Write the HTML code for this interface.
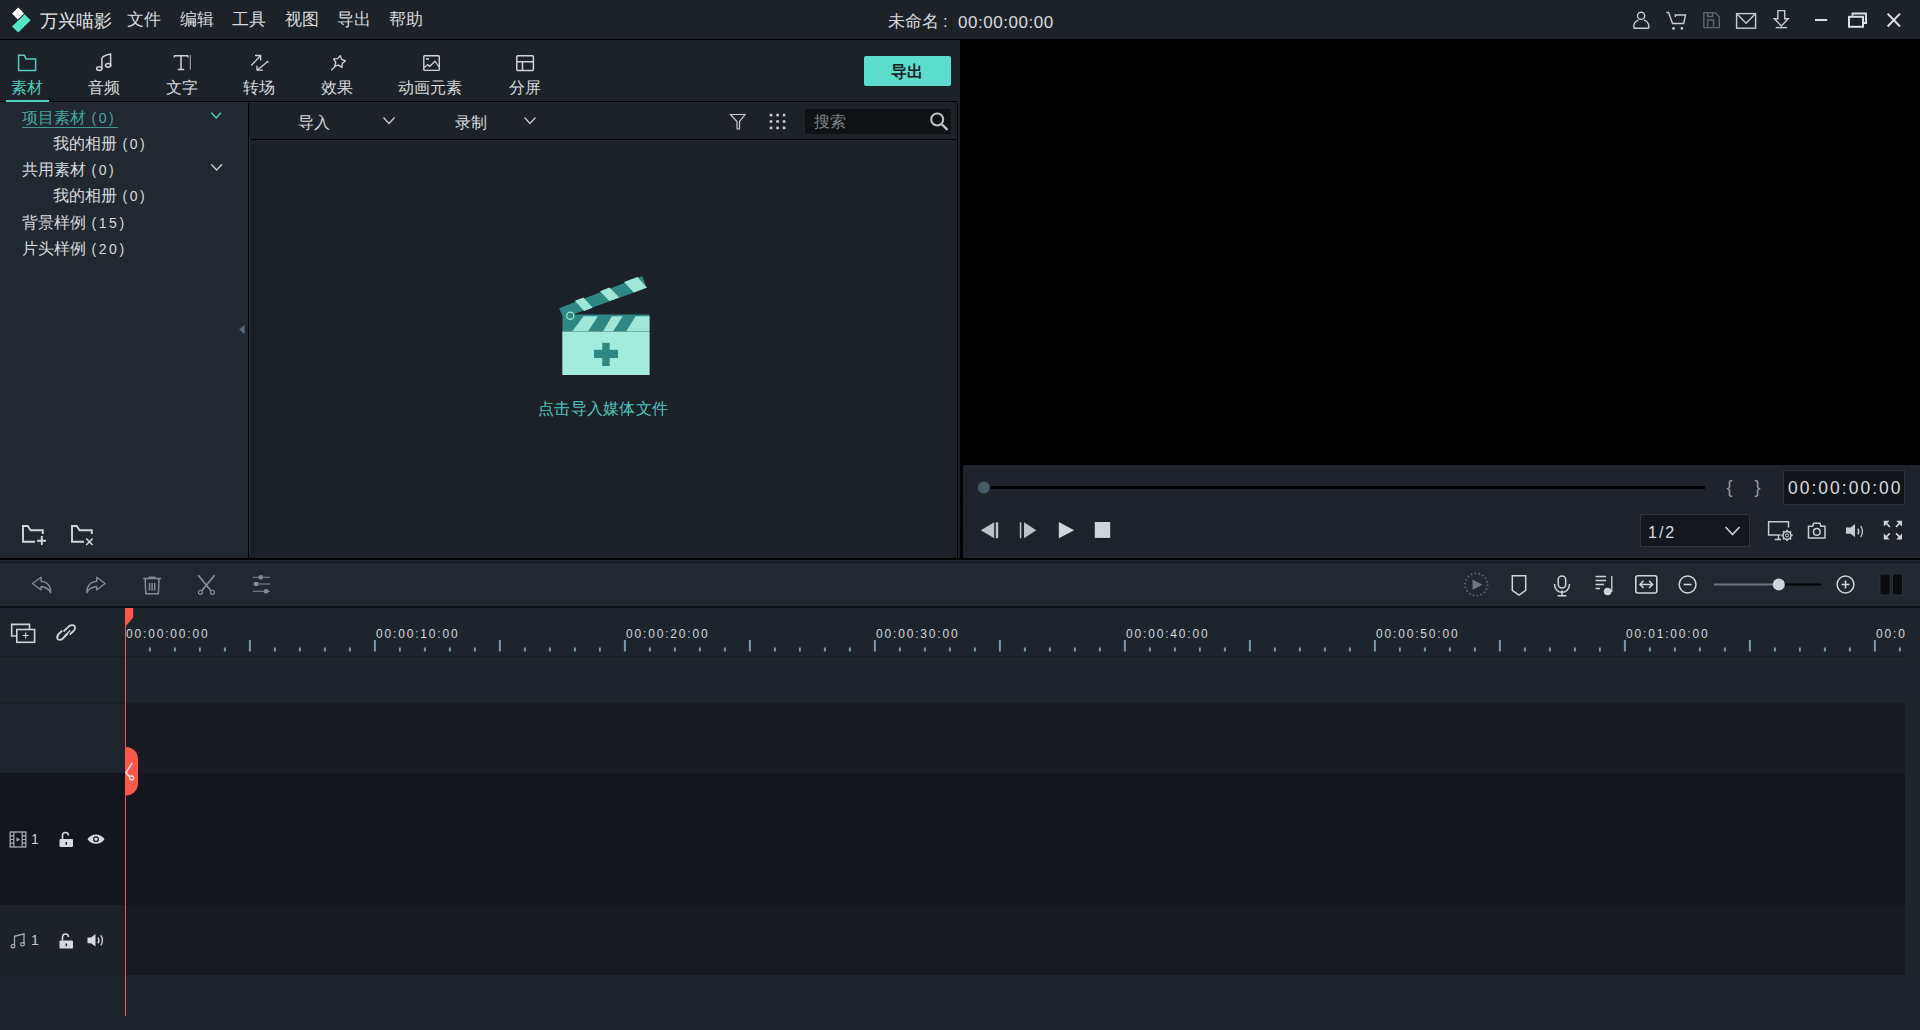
<!DOCTYPE html>
<html><head><meta charset="utf-8">
<style>
*{margin:0;padding:0;box-sizing:border-box}
html,body{width:1920px;height:1030px;overflow:hidden;background:#1e232a;font-family:"Liberation Sans",sans-serif;color:#d4d8dc}
.a{position:absolute}
svg{position:absolute;overflow:visible}
#title{left:0;top:0;width:1920px;height:39px;background:#1d2229}
#sep1{left:0;top:38.5px;width:1920px;height:1.5px;background:#000}
#tabs{left:0;top:40px;width:960px;height:61px;background:#1d2229}
#tabline{left:0;top:101px;width:957.8px;height:1.2px;background:#000}
#tree{left:0;top:102px;width:248px;height:455px;background:#222830}
#treeline{left:248px;top:103px;width:1px;height:455px;background:#000}
#treeline2{left:249px;top:140px;width:1px;height:418px;background:#22272f}
#treeline2{left:249px;top:139px;width:1px;height:418px;background:#262c34}
#media{left:249px;top:102px;width:708px;height:456px;background:#1c2128}
#mediabar{left:249px;top:102px;width:708px;height:37px;background:#1d2229}
#mbline{left:251px;top:138.8px;width:706px;height:1.4px;background:#000}
#vline{left:957px;top:103px;width:1px;height:455px;background:#000}
#vline2{left:957px;top:40px;width:3px;height:518px;background:#1d2229}
#preview{left:960px;top:39px;width:960px;height:426px;background:#000}
#ctrl{left:963px;top:465px;width:957px;height:93px;background:linear-gradient(#1f242c 0,#1e232b 80%,#20252d 100%)}
#ctrlblk{left:960px;top:465px;width:3px;height:93px;background:#000}
#hsep{left:0;top:557.8px;width:1920px;height:2.3px;background:#000}
#hsep2{left:0;top:560px;width:1920px;height:2px;background:#20262f}
#hsep3{left:0;top:562px;width:1920px;height:1px;background:#13161b}
#tltool{left:0;top:563px;width:1920px;height:43px;background:#222830}
#tlline{left:0;top:606px;width:1920px;height:2px;background:#0d1014}
#ruler{left:0;top:608px;width:1920px;height:422px;background:#1e242b}
.t16{font-size:16px;line-height:20px;white-space:nowrap;color:#d8dbde}
.mono{font-family:"Liberation Mono",monospace}
.par{font-family:"Liberation Sans",sans-serif;font-size:14px;letter-spacing:2.6px;margin-left:1px}
.rl{position:absolute;top:624.5px;font-size:13.6px;line-height:17px;color:#d6dade;letter-spacing:2.1px;white-space:nowrap;transform:scaleX(0.88);transform-origin:0 0}
</style></head><body>
<div class="a" id="title"></div>
<div class="a" id="sep1"></div>
<div class="a" id="tabs"></div>
<div class="a" id="tabline"></div>
<div class="a" id="tree"></div>
<div class="a" id="treeline"></div>
<div class="a" id="media"></div>
<div class="a" id="mediabar"></div>
<div class="a" id="mbline"></div>
<div class="a" id="treeline2"></div>
<div class="a" id="vline2"></div>
<div class="a" id="vline"></div>
<div class="a" id="preview"></div>
<div class="a" id="ctrlblk"></div>
<div class="a" id="ctrl"></div>
<div class="a" id="hsep"></div>
<div class="a" id="hsep2"></div>
<div class="a" id="hsep3"></div>
<div class="a" id="tltool"></div>
<div class="a" id="tlline"></div>
<div class="a" id="ruler"></div>

<!-- TITLE BAR -->
<svg style="left:0;top:0" width="40" height="39">
<polygon points="12,13.5 18.2,7.4 24,13.4 17.8,19.4" fill="#ffffff"/>
<polygon points="12,26.6 24.6,14.3 30.7,20.2 18.2,32.6" fill="#55e6c4"/>
</svg>
<div class="a t16" style="left:40px;top:11px;font-size:18px;color:#e6e6e6">万兴喵影</div>
<div class="a t16" style="left:127px;top:10px;font-size:17px">文件</div>
<div class="a t16" style="left:180px;top:10px;font-size:17px">编辑</div>
<div class="a t16" style="left:232px;top:10px;font-size:17px">工具</div>
<div class="a t16" style="left:285px;top:10px;font-size:17px">视图</div>
<div class="a t16" style="left:337px;top:10px;font-size:17px">导出</div>
<div class="a t16" style="left:389px;top:10px;font-size:17px">帮助</div>
<div class="a t16" style="left:888px;top:12px;font-size:17px">未命名</div><div class="a t16" style="left:943px;top:12px;font-size:17px">:</div><div class="a t16" style="left:958px;top:13px;font-size:17px;letter-spacing:0.55px">00:00:00:00</div>

<!-- TITLE ICONS -->
<svg style="left:1620px;top:0" width="300" height="39" fill="none" stroke="#c9ced4" stroke-width="1.4">
<circle cx="21.1" cy="15.8" r="3.6"/>
<path d="M13.8,28.2 L13.8,26.5 C13.8,22.5 16.5,20.5 18.5,20.2 M28.8,28.2 L28.8,26.5 C28.8,22.5 26,20.5 24,20.2 M13.8,28.2 H28.8"/>
<path d="M46.4,12.5 H48.6 L52.5,23.5 H63.7 L65.5,15 H55.3 V17"/>
<circle cx="53.5" cy="28.4" r="1.3" fill="#c9ced4" stroke="none"/>
<circle cx="61.9" cy="28.4" r="1.3" fill="#c9ced4" stroke="none"/>
<g stroke="#5c636b"><path d="M83.8,12.8 H95.5 L99.3,17 V27.6 H83.8 Z"/><path d="M87.6,12.8 V16.5 H92.6 V12.8 M87.6,27.6 V20 H93.5 V27.6"/></g>
<rect x="116.6" y="13.6" width="19" height="14.6"/>
<path d="M116.6,13.6 L126.1,23.3 L135.6,13.6"/>
<path d="M157.9,10.6 H164.7 V18.8 H168.2 L161.3,25.9 L154.3,18.8 H157.9 Z"/>
<path d="M155.7,27.6 H167"/>
<g stroke="#dadfe4" stroke-width="2"><path d="M195,20 H207.2"/>
<path d="M232.6,15.7 V13.4 H246 V23 H243.5"/><rect x="229" y="16.8" width="14" height="10"/>
<path d="M267.6,13.6 L280,26.5 M280,13.6 L267.6,26.5"/></g>
</svg>

<!-- TABS -->
<svg style="left:0;top:40px" width="560" height="62" fill="none" stroke="#cfd4d9" stroke-width="1.3">
<path d="M18.6,15.3 H24.4 L26.2,19 H35.6 V30.6 H18.6 Z" stroke="#4fd0c0" stroke-width="1.5"/>
<path d="M101.9,28.3 V18.3 C102.6,16.5 106,15 110.6,14.1 V26.3" stroke-width="1.5"/>
<ellipse cx="99.3" cy="28.6" rx="2.7" ry="1.9" stroke-width="1.5"/>
<ellipse cx="108.1" cy="25.3" rx="2.6" ry="1.9" stroke-width="1.5"/>
<path d="M174.4,15.7 H187.8 M174.4,15.2 V17.6 M187.8,15.2 V17.6 M181,15.7 V29.4 M177.8,29.4 H184.2" stroke-width="1.5"/>
<path d="M190.3,15 V29.5" stroke-width="0.8"/>
<path d="M251.3,25.5 L260.6,15.5 M255,15.5 H260.6 V20.5 M267.5,21.8 L257,30.2 M257,25.8 V30.2 H263" stroke-width="1.3"/>
<circle cx="267.5" cy="21.8" r="1" fill="#cfd4d9" stroke="none"/>
<polygon points="340.3,15.6 341.6,19.4 345.4,20.9 342.2,23.4 342.0,27.5 338.6,25.1 334.7,26.2 335.8,22.3 333.6,18.8 337.7,18.7" stroke-width="1.3" stroke-linejoin="round"/>
<path d="M331.3,30.2 L335.5,26" stroke-width="1.3"/>
<rect x="423.8" y="15.8" width="15.5" height="14.6" rx="0.8" stroke-width="1.4"/>
<rect x="426" y="18.2" width="3" height="1.6" fill="#cfd4d9" stroke="none"/>
<path d="M424,27.8 L427.8,24.5 L429.5,26.5 L435,21.2 L439,27" stroke-width="1.2"/>
<rect x="516.8" y="15.8" width="16.6" height="14.6" rx="0.8" stroke-width="1.5"/>
<path d="M516.8,21.7 H533.4 M522.5,21.7 V30.4" stroke-width="1.5"/>
</svg>
<div class="a t16" style="left:11px;top:78px;color:#4fcfbf">素材</div>
<div class="a t16" style="left:88px;top:78px">音频</div>
<div class="a t16" style="left:166px;top:78px">文字</div>
<div class="a t16" style="left:243px;top:78px">转场</div>
<div class="a t16" style="left:321px;top:78px">效果</div>
<div class="a t16" style="left:398px;top:78px">动画元素</div>
<div class="a t16" style="left:509px;top:78px">分屏</div>
<div class="a" style="left:6px;top:100px;width:43px;height:1.5px;background:#4fd0c0"></div>
<div class="a" style="left:864px;top:56px;width:87px;height:30px;background:#5cdccd;border-radius:2px"></div>
<div class="a t16" style="left:891px;top:62px;font-weight:bold;color:#1a2427;font-size:16px">导出</div>

<!-- TREE -->
<div class="a t16" style="left:22px;top:108px;color:#45a69d">项目素材 <span class="par">(0)</span></div>
<div class="a" style="left:22px;top:127px;width:96px;height:1px;background:#3c9a92"></div>
<div class="a t16" style="left:53px;top:134px">我的相册 <span class="par">(0)</span></div>
<div class="a t16" style="left:22px;top:160px">共用素材 <span class="par">(0)</span></div>
<div class="a t16" style="left:53px;top:186px">我的相册 <span class="par">(0)</span></div>
<div class="a t16" style="left:22px;top:213px">背景样例 <span class="par">(15)</span></div>
<div class="a t16" style="left:22px;top:239px">片头样例 <span class="par">(20)</span></div>
<svg style="left:0;top:0" width="250" height="560" fill="none" stroke-width="1.4">
<path d="M211.3,112.8 L216.2,118 L221,112.8" stroke="#4fd0c0"/>
<path d="M211.3,164.3 L216.6,170 L222,164.3" stroke="#c8ccd0"/>
<polygon points="244.7,324.7 244.7,334.3 239,329.5" fill="#5a6878" stroke="none"/>
<g stroke="#d2d7dc" stroke-width="1.9">
<path d="M35,541.8 H23 V526 H27.7 L30.6,530.2 H42.8 V534"/>
<path d="M37.1,540.7 H45.9 M41.8,536 V544.9"/>
<path d="M84,541.8 H72 V526 H76.7 L79.6,530.2 H91.8 V534"/>
<path d="M86.2,538.5 L92.6,545 M92.6,538.5 L86.2,545" stroke-width="1.6"/>
</g>
</svg>

<!-- MEDIA BAR -->
<div class="a t16" style="left:298px;top:113px">导入</div>
<div class="a t16" style="left:455px;top:113px">录制</div>
<svg style="left:0;top:0" width="960" height="140" fill="none" stroke="#c8ccd0" stroke-width="1.3">
<path d="M383.5,117.5 L389,123.5 L394.5,117.5"/>
<path d="M524.5,117.5 L530,123.5 L535.5,117.5"/>
<path d="M730.5,114.5 H745 L739.5,121.5 V129 H737 V121.5 Z" stroke-width="1.2"/>
<g fill="#c8ccd0" stroke="none">
<rect x="769.7" y="113.8" width="2.6" height="2.6"/><rect x="776.3" y="113.8" width="2.6" height="2.6"/><rect x="782.8" y="113.8" width="2.6" height="2.6"/>
<rect x="769.7" y="120.2" width="2.6" height="2.6"/><rect x="776.3" y="120.2" width="2.6" height="2.6"/><rect x="782.8" y="120.2" width="2.6" height="2.6"/>
<rect x="769.7" y="126.6" width="2.6" height="2.6"/><rect x="776.3" y="126.6" width="2.6" height="2.6"/><rect x="782.8" y="126.6" width="2.6" height="2.6"/>
</g>
</svg>
<div class="a" style="left:805px;top:109px;width:146px;height:25px;background:#0f1215"></div>
<div class="a t16" style="left:814px;top:112px;color:#7d8288">搜索</div>
<svg style="left:0;top:0" width="960" height="140" fill="none" stroke="#c0c5ca" stroke-width="1.6">
<circle cx="937.2" cy="119.5" r="6" stroke-width="2"/>
<path d="M942,124.5 L947.5,129.8" stroke-width="2.4"/>
</svg>

<!-- CLAPPER -->
<svg style="left:0;top:0" width="960" height="560">
<polygon points="559.1,308.2 642.2,276 646.8,287.9 575,313.8 562.6,316" fill="#2e8783"/>
<g fill="#9fe8d8">
<polygon points="574.8,300.8 583.5,297.4 592.6,307.8 584.2,311"/>
<polygon points="600,291.2 609.4,287.6 619.2,297.4 609.4,301"/>
<polygon points="624,282 637.4,277 646.8,287.6 633.9,292.5"/>
</g>
<rect x="562.5" y="314.5" width="87" height="17" fill="#2e8783"/>
<g fill="#9fe8d8">
<polygon points="583.5,316.2 597.9,316.2 588.1,331.3 572.4,331.3"/>
<polygon points="611.8,316.2 622.7,316.2 613.2,331.3 603.1,331.3"/>
<polygon points="635.6,316.2 649.5,316.2 649.5,331.3 626.2,331.3"/>
</g>
<circle cx="570.3" cy="315.8" r="3.6" fill="#2e8783" stroke="#9fe8d8" stroke-width="1.2"/>
<rect x="562.3" y="331.5" width="87.3" height="43.5" fill="#a3ecdc"/>
<rect x="594" y="349.8" width="24" height="8.2" fill="#2e8783"/>
<rect x="602.3" y="342.8" width="7.4" height="23.2" fill="#2e8783"/>
</svg>
<div class="a t16" style="left:538px;top:399px;color:#4cc7bf;letter-spacing:0.3px">点击导入媒体文件</div>

<!-- PLAYER CONTROLS -->
<div class="a" style="left:990px;top:485.5px;width:715px;height:3.5px;background:#000"></div>
<svg style="left:0;top:0" width="1920" height="560">
<circle cx="983.8" cy="487.4" r="6" fill="#4a5a66"/>
<g fill="#bdc2c9">
<polygon points="980.8,530.3 994.2,522.3 994.2,538.2"/><rect x="995.8" y="522.3" width="2.4" height="15.9"/>
<rect x="1019.8" y="522.3" width="1.5" height="15.9"/><polygon points="1024,522.3 1024,538.2 1036.3,530.3"/>
</g>
<g fill="#d0d5dc">
<polygon points="1058.8,522 1058.8,538.2 1074.2,530.2"/>
<rect x="1094.8" y="522" width="15.4" height="15.9"/>
</g>
</svg>
<div class="a" style="left:1726.5px;top:476px;font-size:18px;line-height:22px;color:#959aa0">{</div>
<div class="a" style="left:1754.5px;top:476px;font-size:18px;line-height:22px;color:#959aa0">}</div>
<div class="a" style="left:1783px;top:470px;width:122px;height:35px;background:#111418;border:1px solid #2b323a"></div>
<div class="a" style="left:1788px;top:477px;font-size:19px;line-height:22px;color:#dadde1;letter-spacing:2.2px;transform:scaleX(0.92);transform-origin:0 0">00:00:00:00</div>
<div class="a" style="left:1640px;top:514px;width:110px;height:33px;background:#14181d;border:1px solid #2e353d"></div>
<div class="a" style="left:1648px;top:523px;font-size:16px;line-height:20px;color:#d8dce0;letter-spacing:2px">1/2</div>
<svg style="left:0;top:0" width="1920" height="560" fill="none" stroke="#c8cdd3" stroke-width="1.6">
<path d="M1725.5,527 L1732.5,534.5 L1739.5,527" stroke-width="1.8"/>
<path d="M1780.5,535 H1768.6 V521.8 H1788.5 V527.5" stroke-width="1.5"/>
<path d="M1778.5,535 V539.5 M1774.8,539.5 H1781" stroke-width="1.5"/>
<circle cx="1787" cy="535.4" r="3.9" stroke-width="1.5"/>
<circle cx="1787" cy="535.4" r="1.6" stroke-width="1"/>
<path d="M1787,529.8 V531.2 M1787,539.6 V541 M1781.4,535.4 H1782.8 M1791.2,535.4 H1792.6 M1783,531.4 L1784,532.4 M1790,538.4 L1791,539.4 M1791,531.4 L1790,532.4 M1784,538.4 L1783,539.4" stroke-width="1.6"/>
<path d="M1808.5,526.2 H1812.8 L1813.6,523.3 H1820 L1820.8,526.2 H1825 V538 H1808.5 Z" stroke-width="1.5" stroke-linejoin="round"/>
<circle cx="1816.8" cy="531.9" r="3.3" stroke-width="1.5"/>
<polygon points="1846,527.4 1850.6,527.4 1855,524.1 1855,537 1850.6,533.8 1846,533.8" fill="#c8cdd3" stroke="none"/>
<path d="M1857.8,528.6 Q1859.8,531.4 1857.8,534.3 M1860.7,525.9 Q1864.3,531.4 1860.7,537" stroke-width="1.3"/>
<g fill="#d0d5da" stroke="none"><polygon points="1883.8,520.8 1889.6,520.8 1883.8,526.6"/><polygon points="1902,520.8 1896.2,520.8 1902,526.6"/>
<polygon points="1883.8,539.4 1889.6,539.4 1883.8,533.6"/><polygon points="1902,539.4 1896.2,539.4 1902,533.6"/></g>
<g stroke-width="1.7" stroke="#d0d5da"><path d="M1885.5,522.5 L1889.8,526.8 M1900.3,522.5 L1896,526.8 M1885.5,537.7 L1889.8,533.4 M1900.3,537.7 L1896,533.4"/></g>
</svg>

<!-- TIMELINE TOOLBAR -->
<svg style="left:0;top:0" width="1920" height="610" fill="none" stroke="#868d95" stroke-width="1.3">
<path d="M32.5,583.6 L41.1,577.3 V581.3 C47,581.3 51,586 50.7,592.7 C48.5,588.5 45,587 41.1,586.5 V589.9 Z" stroke-linejoin="round"/>
<path d="M105.1,583.6 L96.7,577.3 V581.3 C90.5,581.3 86.8,586 86.8,592.7 C89,588.5 92.5,587 96.7,586.5 V589.9 Z" stroke-linejoin="round"/>
<path d="M143.2,578.5 H161 M149.5,578.3 V577.3 H154.7 V578.3 M145.2,578.8 L145.8,593.8 H158.4 L159,578.8 M149.5,583 V590.5 M152.1,583 V590.5 M154.7,583 V590.5" stroke-width="1.5"/>
<path d="M198.2,575.3 L210.8,590.5 M214.6,575.3 L202,590.5" stroke-width="1.8"/>
<circle cx="200.4" cy="592.3" r="2" stroke-width="1.2"/><circle cx="212.4" cy="592.3" r="2" stroke-width="1.2"/>
<path d="M252.8,577.3 H270 M252.8,584 H270 M252.8,591.3 H270" stroke-width="1.1"/>
<g fill="#868d95" stroke="none"><rect x="258.8" y="575.3" width="4" height="4"/><rect x="254.3" y="582" width="4" height="4"/><rect x="264.1" y="589.3" width="4" height="4"/></g>

<circle cx="1476.3" cy="584.5" r="11.2" stroke="#5f666d" stroke-width="1.8" stroke-dasharray="1.6 2.3"/>
<polygon points="1472.5,579.5 1472.5,590 1482.3,584.7" fill="#70777e" stroke="none"/>
<path d="M1512.3,575.8 H1525.7 V590.3 L1519,595 L1512.3,590.3 Z" stroke="#d0d5da" stroke-width="1.5"/>
<rect x="1558.2" y="576" width="7.5" height="12" rx="3.75" stroke="#d0d5da" stroke-width="1.5"/>
<path d="M1554.5,584 C1554.5,595 1569.5,595 1569.5,584 M1562,590.5 V595.5 M1557.5,595.8 H1566.5" stroke="#d0d5da" stroke-width="1.5"/>
<path d="M1595.5,576.5 H1606 M1595.5,580.5 H1606 M1595.5,584.5 H1604 M1595.5,588.5 H1600 M1611.8,576 V592" stroke="#d0d5da" stroke-width="1.3"/>
<circle cx="1607.6" cy="591.5" r="3.8" fill="#d0d5da" stroke="none"/>
<rect x="1635.8" y="575.8" width="21" height="17.2" rx="2" stroke="#d0d5da" stroke-width="1.6"/>
<path d="M1640,584.4 H1652.6 M1643.5,580.8 L1640,584.4 L1643.5,588 M1649.1,580.8 L1652.6,584.4 L1649.1,588" stroke="#d0d5da" stroke-width="1.5"/>
<circle cx="1687.6" cy="584.5" r="8.4" stroke="#d0d5da" stroke-width="1.5"/>
<path d="M1683.7,584.5 H1691.5" stroke="#d0d5da" stroke-width="1.6"/>
<path d="M1713.8,584.5 H1778.8" stroke="#6a7580" stroke-width="2"/>
<path d="M1778.8,584.5 H1821.3" stroke="#000" stroke-width="2"/>
<circle cx="1778.8" cy="584.5" r="6" fill="#d0d5da" stroke="none"/>
<circle cx="1845.5" cy="584.5" r="8.4" stroke="#d0d5da" stroke-width="1.5"/>
<path d="M1841.6,584.5 H1849.4 M1845.5,580.6 V588.4" stroke="#d0d5da" stroke-width="1.6"/>
<rect x="1880" y="574" width="10" height="21" fill="#0a0c0f" stroke="#2a3038" stroke-width="1"/>
<rect x="1892.5" y="574" width="10" height="21" fill="#0a0c0f" stroke="#2a3038" stroke-width="1"/>
</svg>

<!-- TIMELINE -->
<div class="a" style="left:0;top:656px;width:1905px;height:1px;background:#191e24"></div>
<div class="a" style="left:0;top:703px;width:125px;height:70px;background:#1f252c;border-top:1px solid #1a1f25"></div>
<div class="a" style="left:126px;top:703px;width:1779px;height:70px;background:#181c22"></div>
<div class="a" style="left:0;top:773px;width:1905px;height:132px;background:#13161c"></div>
<div class="a" style="left:0;top:905px;width:125px;height:70px;background:#1d2229"></div>
<div class="a" style="left:126px;top:905px;width:1779px;height:70px;background:#171b21"></div>
<svg style="left:0;top:0" width="1920" height="1030">
<g fill="#7799b0"><rect x="148.9" y="647.5" width="2" height="4"/><rect x="173.9" y="647.5" width="2" height="4"/><rect x="198.9" y="647.5" width="2" height="4"/><rect x="223.9" y="647.5" width="2" height="4"/><rect x="248.9" y="640" width="2" height="11.5"/><rect x="273.9" y="647.5" width="2" height="4"/><rect x="298.9" y="647.5" width="2" height="4"/><rect x="323.9" y="647.5" width="2" height="4"/><rect x="348.9" y="647.5" width="2" height="4"/><rect x="373.9" y="640" width="2" height="11.5"/><rect x="398.9" y="647.5" width="2" height="4"/><rect x="423.9" y="647.5" width="2" height="4"/><rect x="448.9" y="647.5" width="2" height="4"/><rect x="473.9" y="647.5" width="2" height="4"/><rect x="498.9" y="640" width="2" height="11.5"/><rect x="523.9" y="647.5" width="2" height="4"/><rect x="548.9" y="647.5" width="2" height="4"/><rect x="573.9" y="647.5" width="2" height="4"/><rect x="598.9" y="647.5" width="2" height="4"/><rect x="623.9" y="640" width="2" height="11.5"/><rect x="648.9" y="647.5" width="2" height="4"/><rect x="673.9" y="647.5" width="2" height="4"/><rect x="698.9" y="647.5" width="2" height="4"/><rect x="723.9" y="647.5" width="2" height="4"/><rect x="748.9" y="640" width="2" height="11.5"/><rect x="773.9" y="647.5" width="2" height="4"/><rect x="798.9" y="647.5" width="2" height="4"/><rect x="823.9" y="647.5" width="2" height="4"/><rect x="848.9" y="647.5" width="2" height="4"/><rect x="873.9" y="640" width="2" height="11.5"/><rect x="898.9" y="647.5" width="2" height="4"/><rect x="923.9" y="647.5" width="2" height="4"/><rect x="948.9" y="647.5" width="2" height="4"/><rect x="973.9" y="647.5" width="2" height="4"/><rect x="998.9" y="640" width="2" height="11.5"/><rect x="1023.9" y="647.5" width="2" height="4"/><rect x="1048.9" y="647.5" width="2" height="4"/><rect x="1073.9" y="647.5" width="2" height="4"/><rect x="1098.9" y="647.5" width="2" height="4"/><rect x="1123.9" y="640" width="2" height="11.5"/><rect x="1148.9" y="647.5" width="2" height="4"/><rect x="1173.9" y="647.5" width="2" height="4"/><rect x="1198.9" y="647.5" width="2" height="4"/><rect x="1223.9" y="647.5" width="2" height="4"/><rect x="1248.9" y="640" width="2" height="11.5"/><rect x="1273.9" y="647.5" width="2" height="4"/><rect x="1298.9" y="647.5" width="2" height="4"/><rect x="1323.9" y="647.5" width="2" height="4"/><rect x="1348.9" y="647.5" width="2" height="4"/><rect x="1373.9" y="640" width="2" height="11.5"/><rect x="1398.9" y="647.5" width="2" height="4"/><rect x="1423.9" y="647.5" width="2" height="4"/><rect x="1448.9" y="647.5" width="2" height="4"/><rect x="1473.9" y="647.5" width="2" height="4"/><rect x="1498.9" y="640" width="2" height="11.5"/><rect x="1523.9" y="647.5" width="2" height="4"/><rect x="1548.9" y="647.5" width="2" height="4"/><rect x="1573.9" y="647.5" width="2" height="4"/><rect x="1598.9" y="647.5" width="2" height="4"/><rect x="1623.9" y="640" width="2" height="11.5"/><rect x="1648.9" y="647.5" width="2" height="4"/><rect x="1673.9" y="647.5" width="2" height="4"/><rect x="1698.9" y="647.5" width="2" height="4"/><rect x="1723.9" y="647.5" width="2" height="4"/><rect x="1748.9" y="640" width="2" height="11.5"/><rect x="1773.9" y="647.5" width="2" height="4"/><rect x="1798.9" y="647.5" width="2" height="4"/><rect x="1823.9" y="647.5" width="2" height="4"/><rect x="1848.9" y="647.5" width="2" height="4"/><rect x="1873.9" y="640" width="2" height="11.5"/><rect x="1898.9" y="647.5" width="2" height="4"/></g>
</svg>
<div class="a" style="left:0;top:0;width:1905px;height:660px;overflow:hidden"><div class="a rl" style="left:126px">00:00:00:00</div><div class="a rl" style="left:376px">00:00:10:00</div><div class="a rl" style="left:626px">00:00:20:00</div><div class="a rl" style="left:876px">00:00:30:00</div><div class="a rl" style="left:1126px">00:00:40:00</div><div class="a rl" style="left:1376px">00:00:50:00</div><div class="a rl" style="left:1626px">00:01:00:00</div><div class="a rl" style="left:1876px">00:01:10:00</div></div>
<svg style="left:0;top:0" width="1920" height="1030" fill="none" stroke="#cfd4d9" stroke-width="1.5">
<path d="M16.8,636 H11.7 V624.4 H29.5 V629.5" stroke-width="1.6"/>
<rect x="16.8" y="629.5" width="17.8" height="12.8" stroke-width="1.6"/>
<path d="M25.7,632.5 V638.5 M22.7,635.5 H28.7" stroke-width="1.2"/>
<path d="M63.5,631.5 L68.3,626.8 C70.5,624.6 73.5,624.6 74.5,626 C75.5,627.5 75,629.8 73,631.5 L69.8,634.6 M67.8,633.5 L62.8,638.5 C60.8,640.5 58,640.3 57.5,638.8 C56.8,637.3 57.3,635.3 59.2,633.5 L62.2,630.6" stroke-width="1.8"/>
<path d="M64.6,636 L70.2,630.6" stroke-width="1.4"/>
</svg>
<!-- track headers -->
<svg style="left:0;top:0" width="130" height="1030" fill="none" stroke="#a9aeb4" stroke-width="1.2">
<rect x="10.2" y="832" width="15.6" height="15" stroke-width="1.3"/>
<path d="M13.8,832 V847 M22.2,832 V847 M10.2,835.8 H13.8 M10.2,839.5 H13.8 M10.2,843.2 H13.8 M22.2,835.8 H25.8 M22.2,839.5 H25.8 M22.2,843.2 H25.8"/>
<polygon points="16.5,837.3 16.5,841.7 20,839.5" fill="#a9aeb4" stroke="none"/>
<path d="M14.5,946 V936.3 L24,933.8 V944" stroke-width="1.3"/>
<ellipse cx="13" cy="946.2" rx="1.9" ry="1.6" stroke-width="1.2"/>
<ellipse cx="22.5" cy="944.3" rx="1.9" ry="1.6" stroke-width="1.2"/>
<g fill="#d6dade" stroke="none">
<rect x="59.5" y="839" width="13.5" height="8" rx="1"/>
<rect x="59.5" y="940.5" width="13.5" height="8" rx="1"/>
<polygon points="1846,0 0,0" />
</g>
<path d="M62.5,839 V835.5 C62.5,831.5 68.5,831.5 68.5,835.5" stroke="#d6dade" stroke-width="1.6"/>
<path d="M62.5,940.5 V937 C62.5,933 68.5,933 68.5,937" stroke="#d6dade" stroke-width="1.6"/>
<g fill="#1a1d22" stroke="none"><rect x="65.6" y="842" width="1.4" height="2.8"/><rect x="65.6" y="943.5" width="1.4" height="2.8"/></g>
<path d="M87.5,839.2 C91.5,833 100.5,833 104.5,839.2 C100.5,845.4 91.5,845.4 87.5,839.2 Z" fill="#d6dade" stroke="none"/>
<circle cx="96" cy="839.2" r="2.9" fill="#13161c" stroke="none"/>
<circle cx="96" cy="839.2" r="1.6" fill="#d6dade" stroke="none"/>
<polygon points="87.5,937.5 91,937.5 95.5,934 95.5,946.5 91,943.3 87.5,943.3" fill="#d6dade" stroke="none"/>
<path d="M98,937.5 Q100,940.4 98,943.3 M100.8,935.4 Q104.2,940.4 100.8,945.4" stroke="#d6dade" stroke-width="1.3"/>
</svg>
<div class="a" style="left:31px;top:831px;font-size:14px;line-height:17px;color:#c8ccd0">1</div>
<div class="a" style="left:31px;top:932px;font-size:14px;line-height:17px;color:#c8ccd0">1</div>
<!-- playhead -->
<div class="a" style="left:125px;top:608px;width:1px;height:408px;background:#e85a4e"></div>
<svg style="left:0;top:0" width="1920" height="1030">
<polygon points="125,608 133.2,608 133.2,617.5 125.5,626.6 125,626.6" fill="#fb5849"/>
<path d="M125,747 H126 A12,12 0 0 1 138,759 V783.5 A12,12 0 0 1 126,795.5 H125 Z" fill="#fb5849"/>
<path d="M132.4,762.8 L126,772.6 L129.6,776.6" stroke="#f8dcd8" stroke-width="1.6" fill="none"/>
<circle cx="131.6" cy="778" r="2" stroke="#f8dcd8" stroke-width="1.3" fill="none"/>
</svg>
</body></html>
